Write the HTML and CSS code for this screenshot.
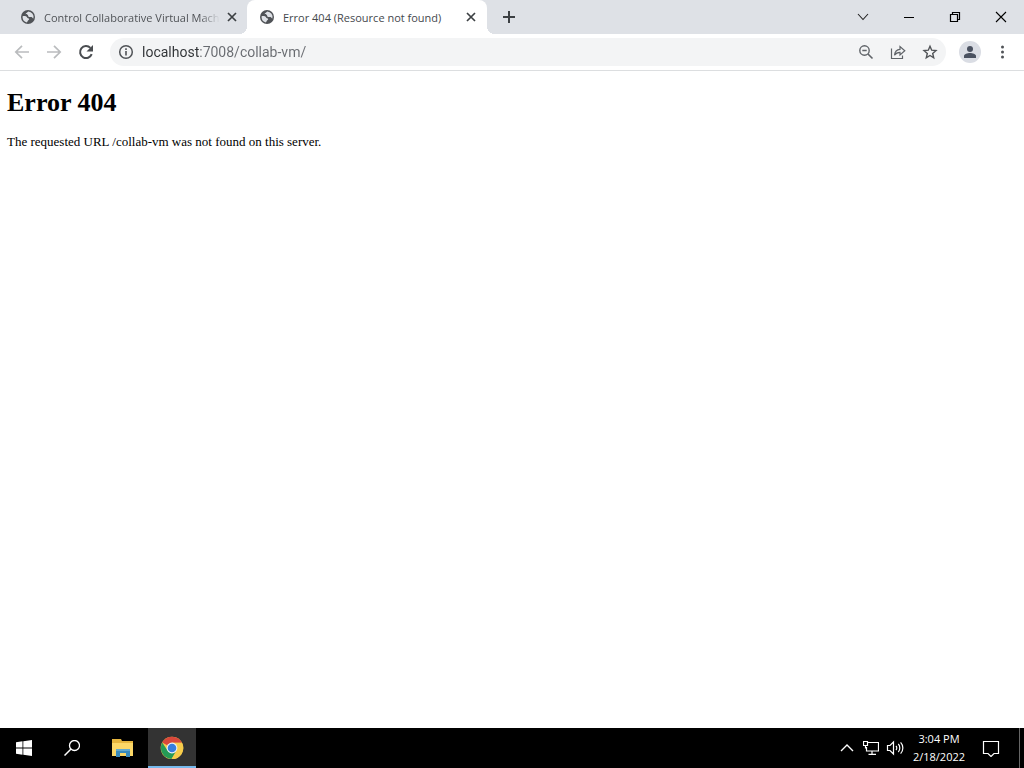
FILE: index.html
```html
<!DOCTYPE html>
<html lang="en">
<head>
<meta charset="utf-8">
<title>Error 404 (Resource not found)</title>
<link rel="stylesheet" href="styles.css">
</head>
<body>
<svg class="defs" aria-hidden="true">
  <symbol id="globe" viewBox="0 0 16 16">
    <circle cx="8" cy="8" r="7" fill="#505357"/>
    <path d="M2.6 7.2c2.4-.5 4.200.1 4.500 1.300.3 1 1.700.6 2 1.400.3.900-1.200 1.200-1.400 2.100-.1.500-.5 1-.9 1.400A5.700 5.700 0 0 1 2.600 7.200z" fill="#dee1e6"/>
    <path d="M8.300 2.500a5.600 5.600 0 0 1 5.100 7c-.8-.2-1.100-1.300-2-1.500-1.200-.2-1.900.4-2.800-.3-.9-.8-.2-1.500-1-1.900-.7-.3-1.700.1-1.900-.7-.2-1 1.500-1.200 2.600-2.600z" fill="#dee1e6"/>
  </symbol>
  <symbol id="cross" viewBox="0 0 16 16">
    <path d="M4 4l8 8M12 4l-8 8" stroke="#3c4043" stroke-width="1.700" fill="none"/>
  </symbol>
</svg>

<header class="tabstrip">
  <div class="tabs">
    <div class="tab">
      <svg class="icon"><use href="#globe"/></svg>
      <button class="tab-title tab-title-fade">Control Collaborative Virtual Machine</button>
      <button class="tab-close" aria-label="Close tab"><svg class="icon"><use href="#cross"/></svg></button>
    </div>
    <div class="tab tab-active">
      <svg class="icon"><use href="#globe"/></svg>
      <button class="tab-title">Error 404 (Resource not found)</button>
      <button class="tab-close" aria-label="Close tab"><svg class="icon"><use href="#cross"/></svg></button>
    </div>
  </div>
  <button class="new-tab" aria-label="New tab">
    <svg class="icon" viewBox="0 0 16 16"><path d="M8 2v12M2 8h12" stroke="#3c4043" stroke-width="2"/></svg>
  </button>
  <div class="window-controls">
    <button class="window-button" aria-label="Search tabs"><svg class="icon" viewBox="0 0 16 16"><path d="M3 5l5 5.500 5-5.500" fill="none" stroke="#222" stroke-width="1.100"/></svg></button>
    <button class="window-button" aria-label="Minimize"><svg class="icon" viewBox="0 0 16 16"><path d="M3 8.500h10" stroke="#000"/></svg></button>
    <button class="window-button" aria-label="Restore"><svg class="icon" viewBox="0 0 16 16"><path d="M3.500 5.500h7v7h-7zM5.500 5.500v-2h7v7h-2" fill="none" stroke="#000" stroke-width="1.200"/></svg></button>
    <button class="window-button" aria-label="Close"><svg class="icon" viewBox="0 0 16 16"><path d="M3 3l10 10M13 3L3 13" stroke="#000" stroke-width="1.100"/></svg></button>
  </div>
</header>

<nav class="toolbar">
  <button class="tool" aria-label="Back"><svg class="icon" viewBox="0 0 16 16"><path d="M15 8H2M8 1.800L1.800 8 8 14.200" fill="none" stroke="#babcbe" stroke-width="1.700"/></svg></button>
  <button class="tool" aria-label="Forward"><svg class="icon" viewBox="0 0 16 16"><path d="M1 8h13M8 1.800L14.200 8 8 14.200" fill="none" stroke="#babcbe" stroke-width="1.700"/></svg></button>
  <button class="tool" aria-label="Reload"><svg class="icon" viewBox="0 0 16 16"><path d="M13.700 10.200A6 6 0 1 1 12.400 3.900" fill="none" stroke="#4a4d51" stroke-width="2"/><path d="M15 1v6.500H8.500z" fill="#4a4d51"/></svg></button>
  <div class="omnibox">
    <button class="tool" aria-label="View site information"><svg class="icon" viewBox="0 0 16 16"><circle cx="8" cy="8" r="6.300" fill="none" stroke="#505357" stroke-width="1.500"/><path d="M8 7v4.500M8 4.300v1.600" stroke="#505357" stroke-width="1.600"/></svg></button>
    <input class="address" type="text" aria-label="Address" value="localhost:7008/collab-vm/" spellcheck="false">
    <button class="tool" aria-label="Zoom"><svg class="icon" viewBox="0 0 16 16"><circle cx="6.500" cy="6.500" r="4.700" fill="none" stroke="#5f6368" stroke-width="1.400"/><path d="M4.300 6.500h4.400M10 10l4.500 4.500" stroke="#5f6368" stroke-width="1.600"/></svg></button>
    <button class="tool" aria-label="Share this page"><svg class="icon" viewBox="0 0 16 16"><path d="M1.500 4.500v10h11v-3M4.500 11.300c.4-3.800 2.300-5.700 5.500-5.900V2.500l4.800 4.300L10 11V8.300c-2.600 0-4.200.9-5.500 3z" fill="none" stroke="#5f6368" stroke-width="1.200"/></svg></button>
    <button class="tool" aria-label="Bookmark this tab"><svg class="icon" viewBox="0 0 16 16"><path d="M8 2.200l1.700 4 4.300.4-3.300 2.900 1 4.300L8 11.500l-3.700 2.300 1-4.300L2 6.600l4.300-.4z" fill="none" stroke="#505357" stroke-width="1.400"/></svg></button>
  </div>
  <button class="profile" aria-label="Profile"><svg class="avatar" viewBox="0 0 22 22"><circle cx="11" cy="11" r="11" fill="#dadde4"/><circle cx="11" cy="8" r="3" fill="#4a5160"/><path d="M5 17v-2c0-2 3.500-3 6-3s6 1 6 3v2z" fill="#4a5160"/></svg></button>
  <button class="tool" aria-label="Menu"><svg class="icon" viewBox="0 0 16 16" fill="#505357"><circle cx="8.500" cy="3" r="1.500"/><circle cx="8.500" cy="8" r="1.500"/><circle cx="8.500" cy="13" r="1.500"/></svg></button>
</nav>

<main class="page">
  <h1 class="page-title">Error 404</h1>
  <p class="page-text">The requested URL /collab-vm was not found on this server.</p>
</main>

<footer class="taskbar">
  <button class="task" aria-label="Start"><svg class="icon" viewBox="0 0 16 16" fill="#fff"><path d="M0 2.300L6.500 1.300v6.200H0zM7.300 1.200L16 0v7.500H7.300zM0 8.400h6.500v6.300L0 13.800zM7.300 8.400H16V16l-8.700-1.200z"/></svg></button>
  <button class="task" aria-label="Search"><svg class="icon" viewBox="0 0 16 16"><circle cx="10.500" cy="5.500" r="5" fill="none" stroke="#fff" stroke-width="1.300"/><path d="M7 9l-6.500 6.500" stroke="#fff" stroke-width="1.500"/></svg></button>
  <button class="task task-files" aria-label="File Explorer"><svg class="task-art" viewBox="0 0 24 24"><path d="M0 3h9l1 2h11v15H0z" fill="#e5b53e"/><path d="M0 7h21v13H0z" fill="#fbd767"/><path d="M4 13h14v8h-4v-4H8v4H4z" fill="#398abb"/><path d="M4 13h14v2H4z" fill="#62a9ce"/></svg></button>
  <button class="task task-active" aria-label="Google Chrome"><svg class="task-art" viewBox="0 0 24 24"><circle cx="12" cy="13" r="11.300" fill="#f7cc4b"/><path d="M12 13L2.200 7.400A11.300 11.300 0 0 1 22 7.800H12z" fill="#d9483b"/><path d="M2.200 7.400A11.300 11.300 0 0 0 11.500 24L16.500 15.600 7.500 15.600z" fill="#259b57"/><path d="M12 7.800h10L12 13z" fill="#d9483b"/><path d="M16.700 15.600L11.500 24.300A11.300 11.300 0 0 0 22 7.800H12z" fill="#f7cc4b"/><circle cx="12" cy="13" r="5.400" fill="#eef2f5"/><circle cx="12" cy="13" r="4.300" fill="#377ddd"/></svg></button>
  <div class="tray">
    <button class="tray-button" aria-label="Show hidden icons"><svg class="icon" viewBox="0 0 16 16"><path d="M2 11l6-6 6 6" fill="none" stroke="#fff" stroke-width="1.400"/></svg></button>
    <button class="tray-button" aria-label="Network"><svg class="icon" viewBox="0 0 16 16"><path d="M5 2.500h10.500v8.500H3.500V7M9 11v3M5.500 14.300h7.500M.5 1.500h4v4h-4zM2.500 5.500v3" fill="none" stroke="#fff" stroke-width="1.200"/></svg></button>
    <button class="tray-button" aria-label="Volume"><svg class="tray-volume" viewBox="0 0 18 16"><path d="M1.500 5.500H4l3.500-3.500v12L4 10.500H1.500zM10 6c1 1 1 3 0 4M12.300 4c2 2 2 6 0 8M14.600 2.300c3 3 3 8.400 0 11.400" fill="none" stroke="#fff" stroke-width="1.200"/></svg></button>
    <button class="clock"><span>3:04 PM</span><span>2/18/2022</span></button>
    <button class="notifications" aria-label="Notifications"><svg class="task-note" viewBox="0 0 18 18"><path d="M1.500 2.500h15v12H12l-3 3-3-3H1.500z" fill="none" stroke="#fff" stroke-width="1.200"/></svg></button>
    <button class="show-desktop" aria-label="Show desktop"></button>
  </div>
</footer>
</body>
</html>
```
FILE: styles.css
```css
* { box-sizing: border-box; }

body {
  margin: 0;
  min-height: 100vh;
  display: flex;
  flex-direction: column;
  background: #fff;
  font-family: "Open Sans", "Noto Sans", sans-serif;
  font-size: 11px;
}

button {
  display: flex;
  align-items: center;
  justify-content: center;
  flex: none;
  margin: 0;
  padding: 0;
  border: 0;
  background: none;
  color: inherit;
  font: inherit;
}

.defs { position: absolute; width: 0; height: 0; }
.icon { display: block; flex: none; width: 16px; height: 16px; }

.tabstrip {
  display: flex;
  align-items: center;
  height: 34px;
  padding-left: 8px;
  background: #dee1e6;
}
.tabs { display: flex; }
.tab {
  position: relative;
  display: flex;
  align-items: center;
  gap: 4px;
  width: 239px;
  height: 34px;
  padding: 0 7px 0 12px;
  color: #505357;
}
.tab-active {
  width: 240px;
  padding-right: 8px;
  border-radius: 8px 8px 0 0;
  background: #fff;
  color: #45494d;
}
.tab-active::before,
.tab-active::after {
  content: "";
  position: absolute;
  bottom: 0;
  width: 8px;
  height: 8px;
}
.tab-active::before {
  right: 100%;
  background: radial-gradient(circle at 0 0, transparent 8px, #fff 8px);
}
.tab-active::after {
  left: 100%;
  background: radial-gradient(circle at 100% 0, transparent 8px, #fff 8px);
}
.tab-title {
  flex: 1;
  min-width: 0;
  margin-left: 4px;
  justify-content: flex-start;
  overflow: hidden;
  white-space: nowrap;
}
.tab-title-fade {
  -webkit-mask-image: linear-gradient(to left, transparent, #000 20px);
  mask-image: linear-gradient(to left, transparent, #000 20px);
}
.new-tab { width: 28px; height: 28px; margin-left: 8px; }
.window-controls { display: flex; margin-left: auto; }
.window-button { width: 46px; height: 28px; }

.toolbar {
  display: flex;
  align-items: center;
  height: 37px;
  padding: 0 6px;
  border-bottom: 1px solid #dcdee0;
}
.tool { width: 32px; height: 28px; }
.omnibox {
  display: flex;
  flex: 1;
  align-items: center;
  min-width: 0;
  height: 28px;
  margin-left: 8px;
  border-radius: 14px;
  background: #f3f4f5;
}
.address {
  flex: 1;
  min-width: 0;
  height: 28px;
  padding: 0;
  border: 0;
  outline: 0;
  background: linear-gradient(to right, #303336 58px, #686b70 58px);
  -webkit-background-clip: text;
  background-clip: text;
  color: transparent;
  font: 14px Roboto, "Open Sans", sans-serif;
}
.profile { width: 32px; height: 28px; margin-left: 8px; }
.avatar { display: block; width: 22px; height: 22px; }

.page {
  flex: 1;
  padding: 16px 7px;
  color: #000;
  font-family: "Liberation Serif", serif;
  font-size: 13px;
}
.page-title { margin: 0 0 16px; font-size: 26px; line-height: 32px; }
.page-text { margin: 0; line-height: 14px; }

.taskbar {
  display: flex;
  height: 40px;
  background: #000;
  color: #fff;
}
.task { width: 48px; height: 40px; }
.task-files { margin-left: 4px; }
.task-active {
  border-bottom: 2px solid #76b9ed;
  background: #333;
}
.task-art { display: block; width: 24px; height: 24px; }
.task-note { display: block; width: 18px; height: 18px; }
.tray { display: flex; margin-left: auto; }
.tray-button { width: 24px; height: 40px; }
.tray-volume { display: block; width: 18px; height: 16px; }
.clock {
  flex-direction: column;
  width: 64px;
  height: 40px;
  line-height: 18px;
}
.notifications { width: 40px; height: 40px; margin-right: 8px; }
.show-desktop { width: 5px; height: 40px; border-left: 1px solid #666; }
```
